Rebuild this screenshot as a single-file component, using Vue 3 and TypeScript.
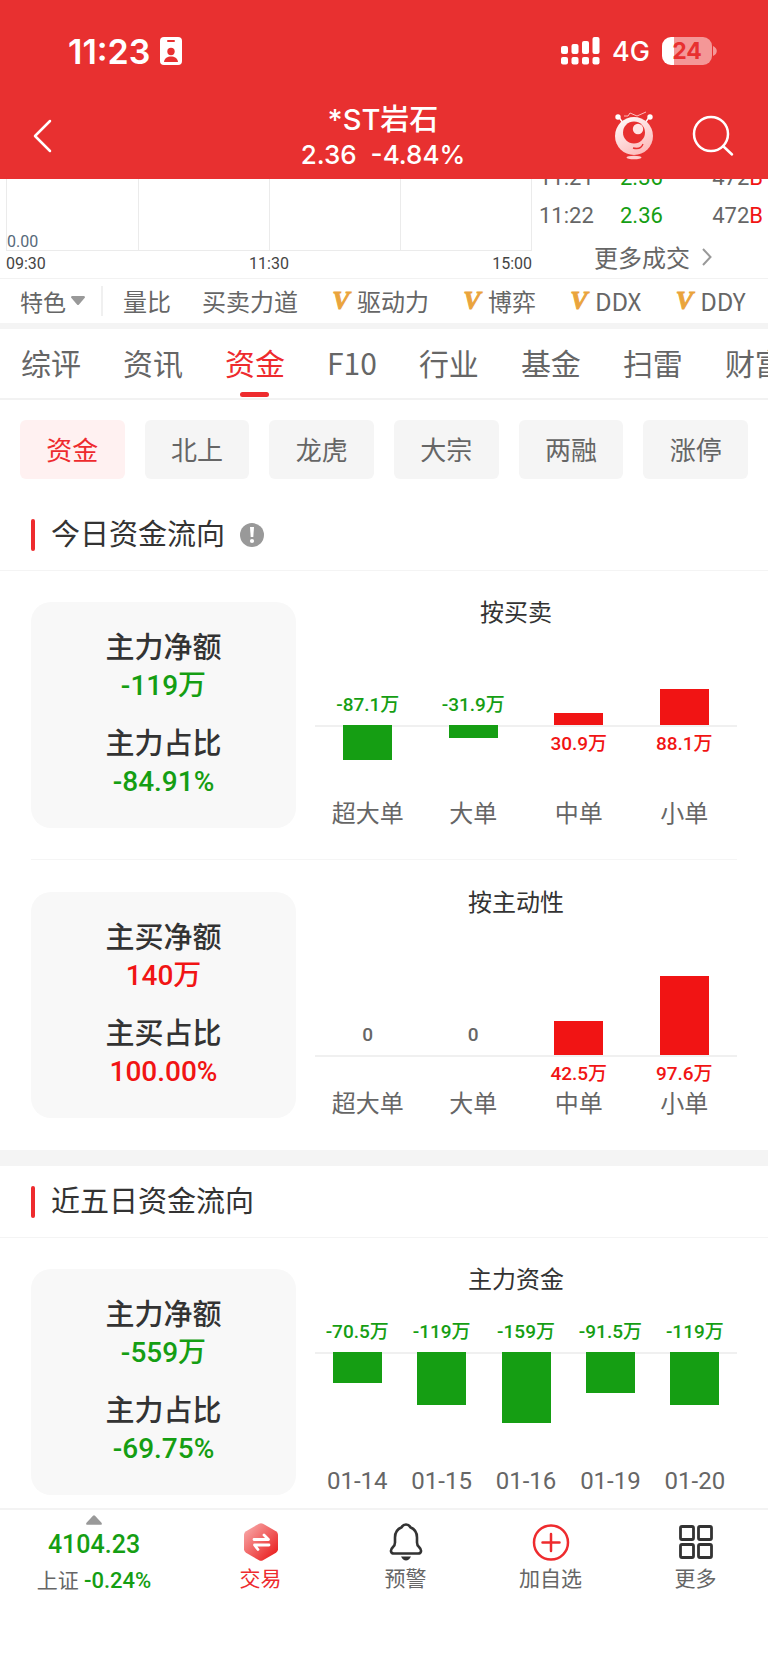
<script setup lang="ts">
interface Bar { name: string; value: string; size: number; dir: 'up' | 'down' | 'flat' }
interface Panel {
  title: string
  above: number
  tone: 'up' | 'down'
  stats: { label: string; value: string }[]
  bars: Bar[]
}

const indicators = [
  { name: '量比', vip: false },
  { name: '买卖力道', vip: false },
  { name: '驱动力', vip: true },
  { name: '博弈', vip: true },
  { name: 'DDX', vip: true },
  { name: 'DDY', vip: true },
]
const tabs = ['综评', '资讯', '资金', 'F10', '行业', '基金', '扫雷', '财富']
const chips = ['资金', '北上', '龙虎', '大宗', '两融', '涨停']
const trades = [
  { time: '11:21', price: '2.36', volume: '472', side: 'B' },
  { time: '11:22', price: '2.36', volume: '472', side: 'B' },
]

const today: Panel[] = [
  {
    title: '按买卖', above: 101, tone: 'down',
    stats: [{ label: '主力净额', value: '-119万' }, { label: '主力占比', value: '-84.91%' }],
    bars: [
      { name: '超大单', value: '-87.1万', size: 35, dir: 'down' },
      { name: '大单', value: '-31.9万', size: 13, dir: 'down' },
      { name: '中单', value: '30.9万', size: 12, dir: 'up' },
      { name: '小单', value: '88.1万', size: 36, dir: 'up' },
    ],
  },
  {
    title: '按主动性', above: 141, tone: 'up',
    stats: [{ label: '主买净额', value: '140万' }, { label: '主买占比', value: '100.00%' }],
    bars: [
      { name: '超大单', value: '0', size: 0, dir: 'flat' },
      { name: '大单', value: '0', size: 0, dir: 'flat' },
      { name: '中单', value: '42.5万', size: 34, dir: 'up' },
      { name: '小单', value: '97.6万', size: 79, dir: 'up' },
    ],
  },
]
const fiveDays: Panel[] = [
  {
    title: '主力资金', above: 61, tone: 'down',
    stats: [{ label: '主力净额', value: '-559万' }, { label: '主力占比', value: '-69.75%' }],
    bars: [
      { name: '01-14', value: '-70.5万', size: 31, dir: 'down' },
      { name: '01-15', value: '-119万', size: 53, dir: 'down' },
      { name: '01-16', value: '-159万', size: 71, dir: 'down' },
      { name: '01-19', value: '-91.5万', size: 41, dir: 'down' },
      { name: '01-20', value: '-119万', size: 53, dir: 'down' },
    ],
  },
]
const sections = [
  { title: '今日资金流向', info: true, panels: today },
  { title: '近五日资金流向', info: false, panels: fiveDays },
]
</script>

<template>
  <div class="app">
    <header class="top">
      <div class="status">
        <div class="clock">
          <span>11:23</span>
          <svg width="22" height="28" viewBox="0 0 22 28" aria-hidden="true">
            <rect width="22" height="28" rx="4" fill="#fff" />
            <rect x="7" y="3" width="8" height="2" rx="1" fill="#e83030" />
            <circle cx="11" cy="14.500" r="3.700" fill="#e83030" />
            <path d="M4 25c.5-4 3.500-5.500 7-5.500s6.500 1.500 7 5.500z" fill="#e83030" />
          </svg>
        </div>
        <div class="signals">
          <svg width="39" height="28" viewBox="0 0 39 28" fill="#fff" aria-hidden="true">
            <rect x="0" y="9" width="7" height="8" rx="2" /><rect x="10.500" y="7" width="7" height="10" rx="2" />
            <rect x="21" y="4" width="7" height="13" rx="2" /><rect x="31.500" y="0" width="7" height="17" rx="2" />
            <rect x="0" y="20" width="7" height="7.500" rx="2" /><rect x="10.500" y="20" width="7" height="7.500" rx="2" />
            <rect x="21" y="20" width="7" height="7.500" rx="2" /><rect x="31.500" y="20" width="7" height="7.500" rx="2" />
          </svg>
          <span class="net">4G</span>
          <div class="battery"><span>24</span></div>
          <svg class="cap" width="4" height="10" viewBox="0 0 4 10" aria-hidden="true"><path d="M0 0c5 2 5 8 0 10z" fill="#f49797" /></svg>
        </div>
      </div>
      <div class="titlebar">
        <button class="icon-btn back" aria-label="返回">
          <svg width="20" height="34" viewBox="0 0 20 34" fill="none" stroke="#fff" stroke-width="2.500" stroke-linecap="round" stroke-linejoin="round"><path d="M18 2 3 17l15 15" /></svg>
        </button>
        <div class="stock">
          <h1>*ST岩石</h1>
          <p><span>2.36</span><span>-4.84%</span></p>
        </div>
        <div class="tools">
          <button class="icon-btn" aria-label="助手">
            <svg width="40" height="50" viewBox="0 0 40 50">
              <defs><linearGradient id="robot" x1="0" y1="0" x2=".6" y2="1"><stop offset="0" stop-color="#fff" /><stop offset="1" stop-color="#fdbcbc" /></linearGradient></defs>
              <path d="M10 5h4l2-3 7 3 9-4" fill="none" stroke="#fbb" stroke-width="1" />
              <path d="m4 5 5 7M36 5l-5 7" stroke="#fff" stroke-width="1.300" />
              <circle cx="4" cy="6" r="2.700" fill="#fff" /><circle cx="36" cy="6" r="2.700" fill="#fff" />
              <circle cx="20" cy="25" r="19" fill="url(#robot)" />
              <circle cx="20" cy="21.500" r="11" fill="#e83030" />
              <circle cx="24" cy="18" r="5.200" fill="#ffe4e4" />
              <path d="M19 37q8 2 10-4" fill="none" stroke="#e83030" stroke-width="1.300" />
              <ellipse cx="20" cy="46.500" rx="7.500" ry="1.800" fill="#fcc" />
            </svg>
          </button>
          <button class="icon-btn" aria-label="搜索">
            <svg width="42" height="42" viewBox="0 0 42 42" fill="none" stroke="#fff" stroke-width="2.500" stroke-linecap="round"><circle cx="19" cy="19" r="17" /><path d="m31 31 9 8.500" /></svg>
          </button>
        </div>
      </div>
    </header>

    <section class="market">
      <div class="minute">
        <div class="grid"><i></i><i></i><i></i><i></i><span class="zero">0.00</span></div>
        <div class="times"><span>09:30</span><span>11:30</span><span>15:00</span></div>
      </div>
      <div class="trades">
        <table>
          <tbody>
            <tr v-for="t in trades" :key="t.time">
              <td>{{ t.time }}</td><td class="down">{{ t.price }}</td><td class="vol">{{ t.volume }}<b>{{ t.side }}</b></td>
            </tr>
          </tbody>
        </table>
        <a class="more" href="#">更多成交
          <svg width="10" height="18" viewBox="0 0 10 18" fill="none" stroke="#999" stroke-width="2"><path d="m1 1 7.500 8L1 17" /></svg>
        </a>
      </div>
    </section>

    <div class="indicators">
      <button class="feature">特色
        <svg width="14" height="10" viewBox="0 0 14 10"><path d="M1 0h12q1 0 1 1.500L8 8.500q-1 1-2 0L0 1.500Q0 0 1 0z" fill="#999" /></svg>
      </button>
      <div class="indicator-list">
        <button v-for="i in indicators" :key="i.name"><em v-if="i.vip">V</em>{{ i.name }}</button>
      </div>
    </div>

    <nav class="tabs">
      <a v-for="t in tabs" :key="t" href="#" :class="{ active: t === '资金' }">{{ t }}</a>
    </nav>
    <div class="chips">
      <button v-for="c in chips" :key="c" :class="{ active: c === '资金' }">{{ c }}</button>
    </div>

    <section v-for="s in sections" :key="s.title" class="flow">
      <div class="flow-head">
        <h2>{{ s.title }}</h2>
        <button v-if="s.info" class="icon-btn" aria-label="说明">
          <svg width="24" height="24" viewBox="0 0 24 24"><circle cx="12" cy="12" r="12" fill="#999" /><path d="M10 4h4l-.7 10h-2.600z" fill="#fff" /><circle cx="12" cy="18" r="2.100" fill="#fff" /></svg>
        </button>
      </div>
      <div v-for="p in s.panels" :key="p.title" class="panel">
        <dl class="card" :class="p.tone">
          <div v-for="x in p.stats" :key="x.label"><dt>{{ x.label }}</dt><dd>{{ x.value }}</dd></div>
        </dl>
        <figure class="chart">
          <figcaption>{{ p.title }}</figcaption>
          <div class="columns">
            <div v-for="b in p.bars" :key="b.name" class="column" :class="b.dir">
              <div class="above" :style="{ height: p.above + 'px' }">
                <div v-if="b.dir === 'up'" class="bar" :style="{ height: b.size + 'px' }"></div>
                <span v-else>{{ b.value }}</span>
              </div>
              <div class="below">
                <div v-if="b.dir === 'down'" class="bar" :style="{ height: b.size + 'px' }"></div>
                <span v-else-if="b.dir === 'up'">{{ b.value }}</span>
              </div>
              <div class="name">{{ b.name }}</div>
            </div>
          </div>
        </figure>
      </div>
    </section>

    <nav class="bottom">
      <button class="index">
        <svg width="16" height="10" viewBox="0 0 16 10"><path d="M7 .8q1-1 2 0l6.500 7q1 2-.5 2H1q-1.500 0-.5-2z" fill="#999" /></svg>
        <strong>4104.23</strong>
        <span class="index-line">上证 <span class="down">-0.24%</span></span>
      </button>
      <button class="hot">
        <svg width="38" height="38" viewBox="0 0 38 38">
          <defs><linearGradient id="hex" x1="0" y1="0" x2="1" y2="1"><stop offset=".1" stop-color="#f7a3a3" /><stop offset=".9" stop-color="#ea2020" /></linearGradient></defs>
          <path d="M17 .7q2-1 4 0l13 7.500q2 1.200 2 3.500v14.600q0 2.300-2 3.500l-13 7.500q-2 1-4 0L4 29.800q-2-1.200-2-3.500V11.700q0-2.300 2-3.500z" fill="url(#hex)" />
          <path d="M12 16.500h14.500L22 12M27 22H12.500l3.500 4.500" fill="none" stroke="#fff" stroke-width="2.800" stroke-linecap="round" stroke-linejoin="round" />
        </svg>
        <span>交易</span>
      </button>
      <button>
        <svg width="38" height="38" viewBox="0 0 38 38">
          <path d="M19 1.500c-2.500 0-3.500 1-4.300 2.700C10 6 8 10 8 14.500v5C8 22 7.600 22.600 6 24c-3.500 3.500-2 6.500 1 6.500h24c3 0 4.500-3 1-6.500-1.600-1.400-2-2-2-4.500v-5C30 10 28 6 23.300 4.200 22.500 2.500 21.500 1.500 19 1.500z" fill="none" stroke="#333" stroke-width="2.600" stroke-linejoin="round" />
          <path d="M14 33.500h10q-2 4-5 4t-5-4z" fill="#333" />
        </svg>
        <span>预警</span>
      </button>
      <button>
        <svg width="38" height="38" viewBox="0 0 38 38" fill="none" stroke="#ee2b2e" stroke-width="2.500" stroke-linecap="round"><circle cx="19" cy="19.500" r="17" /><path d="M19 11v17M10.500 19.500h17" /></svg>
        <span>加自选</span>
      </button>
      <button>
        <svg width="38" height="38" viewBox="0 0 38 38" fill="none" stroke="#333" stroke-width="2.800"><rect x="3.500" y="3.500" width="13" height="13" rx="1.500" /><rect x="21.500" y="3.500" width="13" height="13" rx="1.500" /><rect x="3.500" y="21.500" width="13" height="13" rx="1.500" /><rect x="21.500" y="21.500" width="13" height="13" rx="1.500" /></svg>
        <span>更多</span>
      </button>
    </nav>
  </div>
</template>

<style>
body { background: #fff; }
</style>

<style scoped>
.app { font-family: Roboto, "Noto Sans CJK SC", sans-serif; color: #666; overflow: hidden; }
.app *, .app { box-sizing: border-box; }
h1, h2, p, dl, dt, dd, figure { margin: 0; font-weight: 400; }
button { padding: 0; border: 0; background: none; font: inherit; color: inherit; white-space: nowrap; cursor: pointer; }
a { color: inherit; text-decoration: none; }
svg { display: block; flex: none; }
.icon-btn { display: flex; }
.down { color: #159e13; }

.top { background: #e83030; color: #fff; font-family: Inter, "Noto Sans CJK SC", sans-serif; height: 179px; }
.status { display: flex; justify-content: space-between; align-items: center; padding: 32px 51px 0 68px; height: 70px; }
.clock { display: flex; align-items: center; gap: 10px; font-size: 34px; font-weight: 600; }
.signals { display: flex; align-items: center; }
.net { font-size: 27px; font-weight: 500; margin: 0 12px; }
.battery { width: 50px; height: 28px; border-radius: 9px; background: linear-gradient(90deg, #fff 12px, #f49797 12px); color: #e83030; font-size: 23px; font-weight: 700; line-height: 28px; text-align: center; }
.cap { margin-left: 1px; }
.titlebar { display: grid; grid-template-columns: 1fr auto 1fr; align-items: center; padding: 22px 34px 0 32px; height: 109px; }
.back { justify-self: start; }
.stock { text-align: center; }
.stock h1 { font-size: 29px; line-height: 38px; font-weight: 500; }
.stock p { display: flex; gap: 14px; font-size: 26px; line-height: 32px; font-weight: 500; }
.tools { display: flex; justify-content: flex-end; align-items: center; gap: 38px; }

.market { display: flex; height: 100px; overflow: hidden; border-bottom: 1px solid #f2f2f2; }
.minute { flex: 1; padding-left: 6px; }
.grid { position: relative; display: grid; grid-template-columns: repeat(4, 1fr); height: 72px; border: solid #ebebeb; border-width: 0 1px 1px; }
.grid i + i { border-left: 1px solid #ebebeb; }
.zero { position: absolute; left: 0; bottom: 0; font-size: 16px; line-height: 16px; color: #56697a; }
.times { display: flex; justify-content: space-between; font-size: 16px; line-height: 26px; color: #444; }
.trades { width: 236px; display: flex; flex-direction: column; justify-content: flex-end; }
table { flex: none; border-collapse: collapse; width: 100%; font-size: 22px; }
td { height: 38px; padding: 0 0 0 7px; line-height: 38px; }
td:first-child { width: 81px; }
.vol { text-align: right; padding-right: 5px; }
b { font-weight: 400; color: #f11414; }
.more { flex: none; display: flex; align-items: center; justify-content: center; gap: 12px; height: 43px; font-size: 24px; padding-left: 6px; }

.indicators { display: flex; align-items: center; height: 50px; border-bottom: 6px solid #f4f4f4; font-size: 24px; font-family: "Noto Sans CJK SC", sans-serif; }
.feature { display: flex; align-items: center; gap: 5px; padding: 0 16px 0 20px; font-size: 23px; line-height: 30px; border-right: 2px solid #f0f0f0; }
.indicator-list { display: flex; gap: 33px; padding-left: 20px; overflow: hidden; }
.indicator-list button { display: flex; align-items: center; gap: 6px; line-height: 36px; }
.indicator-list button:first-child { margin-right: -2px; }
em { width: 20px; font: italic 700 26px/36px "Liberation Serif", serif; color: #eaa43c; -webkit-text-stroke: 1px #eaa43c; }

.tabs { display: flex; gap: 42px; height: 71px; padding-left: 21px; border-bottom: 2px solid #f2f2f2; font: 30px/67px "Noto Sans CJK SC", sans-serif; white-space: nowrap; overflow: hidden; }
.tabs a { position: relative; flex: none; height: 69px; }
.tabs .active { color: #ee2b2e; }
.tabs .active::after { content: ""; position: absolute; left: 50%; bottom: 1px; width: 29px; height: 5px; margin-left: -15px; border-radius: 3px; background: #ee2b2e; }
.chips { display: grid; grid-template-columns: repeat(6, 1fr); gap: 20px; padding: 20px; }
.chips button { height: 59px; padding-bottom: 2px; border-radius: 6px; background: #f5f5f5; font-size: 26px; }
.chips .active { background: #fff1f1; color: #ee2b2e; }

.flow + .flow { border-top: 16px solid #f4f4f4; }
.flow-head { display: flex; align-items: center; gap: 15px; height: 72px; padding: 0 31px; border-bottom: 1px solid #f4f4f4; }
.flow-head h2 { display: flex; align-items: center; gap: 16px; font-size: 29px; line-height: 40px; color: #333; }
.flow-head h2::before { content: ""; width: 4px; height: 32px; border-radius: 2px; background: #ee2b2e; }
.panel { display: flex; gap: 19px; margin: 0 31px; padding: 31px 0; }
.panel + .panel { border-top: 1px solid #f5f5f5; padding: 32px 0; }
.flow:nth-last-of-type(1) .panel { padding-bottom: 13px; }
.card { flex: 0 0 265px; display: flex; flex-direction: column; gap: 20px; padding: 26px 0 24px; border-radius: 20px; background: #f8f8f8; text-align: center; height: 226px; }
dt { font-size: 29px; line-height: 40px; font-weight: 500; color: #333; }
dd { font-size: 28px; line-height: 36px; }
.card dd { font-weight: 500; }
.card.up dd { color: #f11414; }
.card.down dd { color: #159e13; }
.chart { flex: 1; display: flex; flex-direction: column; height: 226px; }
figcaption { padding-right: 20px; font-size: 24px; line-height: 22px; text-align: center; color: #333; }
.columns { flex: 1; display: flex; }
.column { flex: 1; display: flex; flex-direction: column; text-align: center; font-size: 19px; font-weight: 500; }
.above { display: flex; flex-direction: column; justify-content: flex-end; align-items: center; }
.above span { line-height: 28px; padding-bottom: 6px; }
.below { flex: 1; display: flex; flex-direction: column; align-items: center; box-shadow: inset 0 2px #f0f0f0; }
.below span { line-height: 28px; padding-top: 5px; }
.bar { width: 49px; background: currentColor; }
.column.up { color: #f11414; }
.column.down { color: #159e13; }
.column.flat { color: #666; }
.name { font-size: 24px; line-height: 28px; font-weight: 400; color: #666; }

.bottom { display: grid; grid-template-columns: 188px repeat(4, 1fr); border-top: 2px solid #f3f3f3; height: 155px; align-items: start; }
.bottom button { display: flex; flex-direction: column; align-items: center; gap: 2px; padding-top: 13px; font-size: 21px; line-height: 32px; }
.bottom .index { padding-top: 5px; gap: 0; }
.index strong { font-size: 25px; line-height: 40px; font-weight: 500; color: #159e13; }
.index .down { font-size: 22px; font-weight: 500; }
.bottom .hot { color: #ee2b2e; }
</style>
